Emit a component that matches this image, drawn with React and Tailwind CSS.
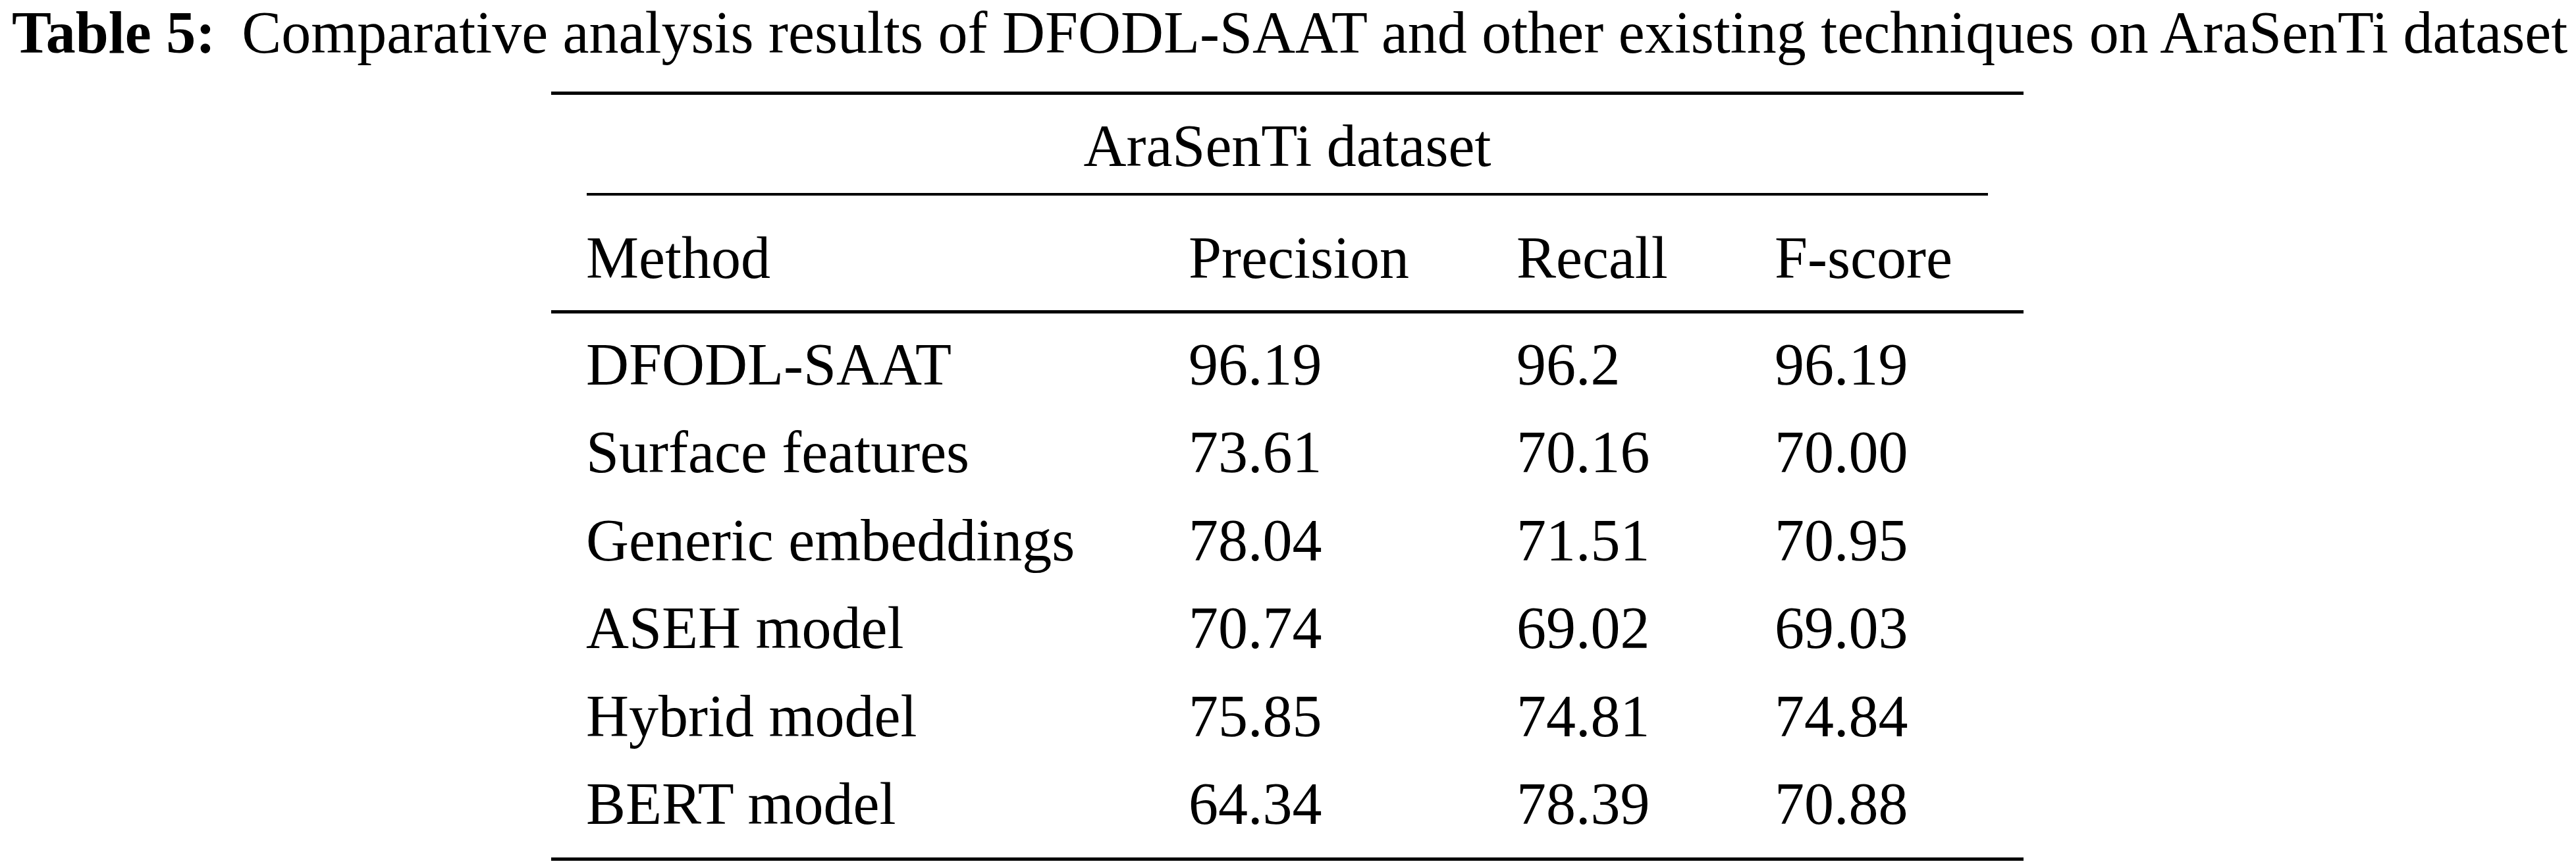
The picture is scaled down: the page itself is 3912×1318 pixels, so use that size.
const rows = [
  ["DFODL-SAAT", "96.19", "96.2", "96.19"],
  ["Surface features", "73.61", "70.16", "70.00"],
  ["Generic embeddings", "78.04", "71.51", "70.95"],
  ["ASEH model", "70.74", "69.02", "69.03"],
  ["Hybrid model", "75.85", "74.81", "74.84"],
  ["BERT model", "64.34", "78.39", "70.88"],
];

const serif = { fontFamily: '"Liberation Serif", "Times New Roman", serif' };

const App = () => {
  return (
    <div className="w-[3912px] h-[1318px] bg-white text-black overflow-hidden" style={serif}>
      {/* caption */}
      <div className="flex pl-[18px] gap-[40px] text-[90px] leading-[100px] whitespace-nowrap">
        <span className="font-bold">Table 5:</span>
        <span>Comparative analysis results of DFODL-SAAT and other existing techniques on AraSenTi dataset</span>
      </div>

      <div className="w-[2236px] ml-[837px] mt-[39px] text-[90px]">
        <div className="h-[5px] bg-black" />
        <div className="pt-[28px] pb-[21px] text-center leading-[100px]">AraSenTi dataset</div>
        <div className="mx-[54px] h-[4px] bg-black" />

        <div className="grid grid-cols-[915px_498px_392px_1fr] pl-[53px] pt-[45px] pb-[29px] leading-[100px]">
          <div>Method</div>
          <div>Precision</div>
          <div>Recall</div>
          <div>F-score</div>
        </div>
        <div className="h-[5px] bg-black" />

        <div className="pt-[11px] pb-[15px]">
          {rows.map((r) => (
            <div
              key={r[0]}
              className="grid grid-cols-[915px_498px_392px_1fr] pl-[53px] leading-[133.4px]"
            >
              {r.map((c, i) => (
                <div key={i}>{c}</div>
              ))}
            </div>
          ))}
        </div>
        <div className="h-[5px] bg-black" />
      </div>
    </div>
  );
};

export default App;
